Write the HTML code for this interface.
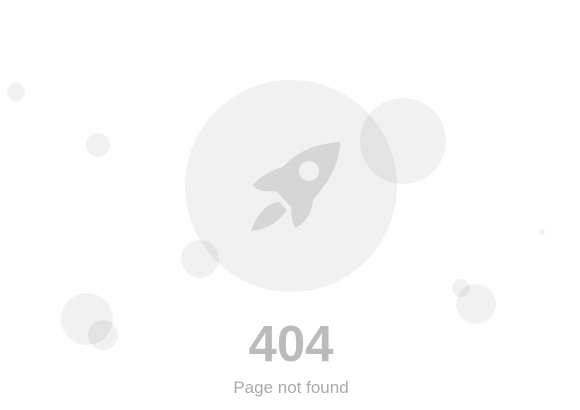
<!DOCTYPE html>
<html><head><style>
html,body{margin:0;padding:0;background:#fff;width:580px;height:410px;overflow:hidden;font-family:"Liberation Sans",sans-serif}
svg{position:absolute;left:0;top:0}
.t{position:absolute;left:0;width:582px;text-align:center}
</style></head><body>
<svg width="580" height="410">
<g fill="rgb(0,0,0)" fill-opacity="0.055">
<circle cx="291" cy="186" r="106"/>
<circle cx="403" cy="141" r="43"/>
<circle cx="200" cy="259" r="19"/>
<circle cx="16" cy="92" r="9"/>
<circle cx="98" cy="145" r="12"/>
<circle cx="87" cy="319" r="26"/>
<circle cx="103" cy="335" r="15"/>
<circle cx="476" cy="304" r="20"/>
<circle cx="461" cy="288" r="9"/>
<circle cx="542" cy="232" r="3"/>
</g>
<path fill="#d6d6d6" d="M340,142 C328,143 318,145 308,149 C297,154 289,160 283,167 C272,170 260,176 253,185 C256,191 266,192 276,191 L291,207 C291,214 292,221 295,228 C304,224 312,214 313,200 C319,193 327,183 332,173 C337,163 340,153 340,142 Z"/>
<path fill="#d6d6d6" d="M279,202 C266,203 256,216 251,231 C266,230 280,221 287,210 Z"/>
<circle cx="309" cy="171" r="10" fill="#f1f1f1"/>
</svg>
<div class="t" style="top:314px;font-size:51px;font-weight:bold;color:#bbb;line-height:60px">404</div>
<div class="t" style="top:377px;font-size:17px;color:#aaa;line-height:22px">Page not found</div>
</body></html>
